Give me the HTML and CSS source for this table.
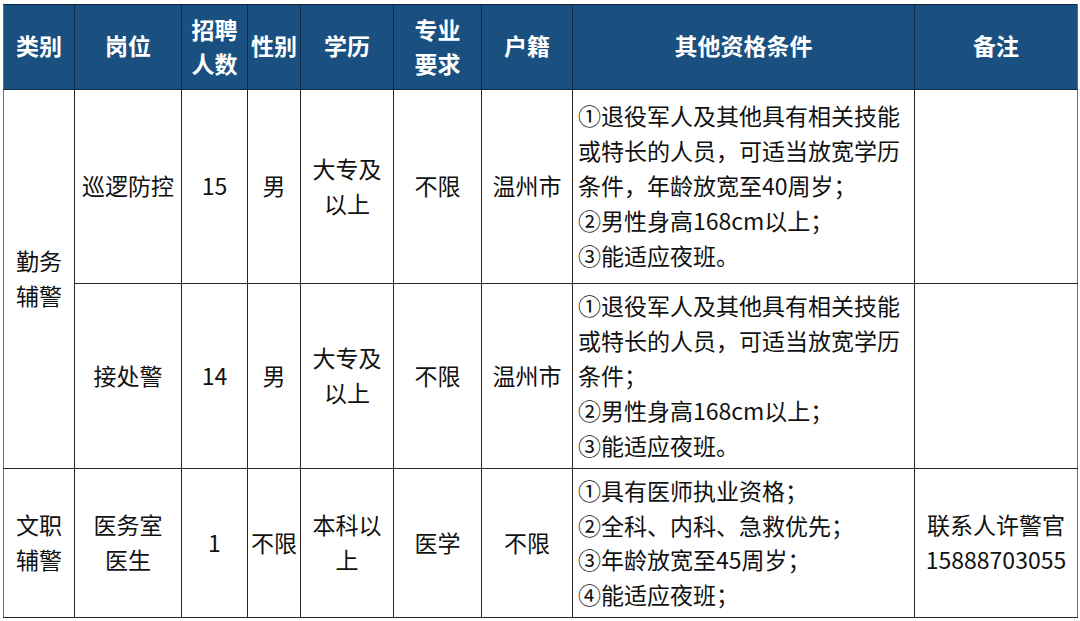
FILE: index.html
```html
<!DOCTYPE html>
<html lang="zh-CN">
<head>
<meta charset="utf-8">
<title>招聘岗位表</title>
<link rel="stylesheet" href="styles.css">
</head>
<body>
<table class="jobs">
  <colgroup>
    <col class="c1"><col class="c2"><col class="c3"><col class="c4"><col class="c5"><col class="c6"><col class="c7"><col class="c8"><col class="c9">
  </colgroup>
  <thead>
    <tr class="head">
      <th>类别</th>
      <th>岗位</th>
      <th class="two">招聘<br>人数</th>
      <th>性别</th>
      <th>学历</th>
      <th class="two">专业<br>要求</th>
      <th>户籍</th>
      <th>其他资格条件</th>
      <th>备注</th>
    </tr>
  </thead>
  <tbody>
    <tr class="r1">
      <td rowspan="2" class="cat">勤务<br>辅警</td>
      <td>巡逻防控</td>
      <td>15</td>
      <td>男</td>
      <td>大专及<br>以上</td>
      <td>不限</td>
      <td>温州市</td>
      <td class="cond">①退役军人及其他具有相关技能<br>或特长的人员，可适当放宽学历<br>条件，年龄放宽至40周岁；<br>②男性身高168cm以上；<br>③能适应夜班。</td>
      <td></td>
    </tr>
    <tr class="r2">
      <td>接处警</td>
      <td>14</td>
      <td>男</td>
      <td>大专及<br>以上</td>
      <td>不限</td>
      <td>温州市</td>
      <td class="cond">①退役军人及其他具有相关技能<br>或特长的人员，可适当放宽学历<br>条件；<br>②男性身高168cm以上；<br>③能适应夜班。</td>
      <td></td>
    </tr>
    <tr class="r3">
      <td class="cat">文职<br>辅警</td>
      <td>医务室<br>医生</td>
      <td>1</td>
      <td>不限</td>
      <td>本科以<br>上</td>
      <td>医学</td>
      <td>不限</td>
      <td class="cond tight">①具有医师执业资格；<br>②全科、内科、急救优先；<br>③年龄放宽至45周岁；<br>④能适应夜班；</td>
      <td class="note">联系人许警官<br>15888703055</td>
    </tr>
  </tbody>
</table>
</body>
</html>
```
FILE: styles.css
```css
html, body {
  margin: 0;
  padding: 0;
  background: #ffffff;
}
body {
  padding: 4px 0 0 3px;
  font-family: "Noto Sans CJK SC", "Noto Sans", sans-serif;
  font-size: 23px;
  font-weight: 400;
  color: #111111;
}
.jobs {
  border-collapse: collapse;
  table-layout: fixed;
  width: 1075px;
}
.c1 { width: 71px; }
.c2 { width: 107px; }
.c3 { width: 66px; }
.c4 { width: 53px; }
.c5 { width: 93px; }
.c6 { width: 88px; }
.c7 { width: 91px; }
.c8 { width: 342px; }
.c9 { width: 163px; }

.jobs th, .jobs td {
  border: 1px solid #262626;
  padding: 0 2px 2px;
  text-align: center;
  vertical-align: middle;
  line-height: 35px;
  white-space: nowrap;
}
.jobs th {
  background: #19507f;
  color: #ffffff;
  font-weight: 700;
  border-color: #0f2a44;
  padding-bottom: 4px;
}
.jobs th.two { line-height: 34px; padding-bottom: 2px; }
.head { height: 85px; }
.r1 { height: 194px; }
.r2 { height: 185px; }
.r3 { height: 149px; }

.jobs tr > :first-child { border-left-color: #6e6e6e; }
.jobs tr > :last-child { border-right-color: #6e6e6e; }
.jobs .r2 > :first-child { border-left-color: #262626; }

.jobs td.cond {
  text-align: left;
  padding-left: 5px;
}
.jobs td.tight { line-height: 34.5px; }
.jobs td.note { line-height: 35px; }
```
